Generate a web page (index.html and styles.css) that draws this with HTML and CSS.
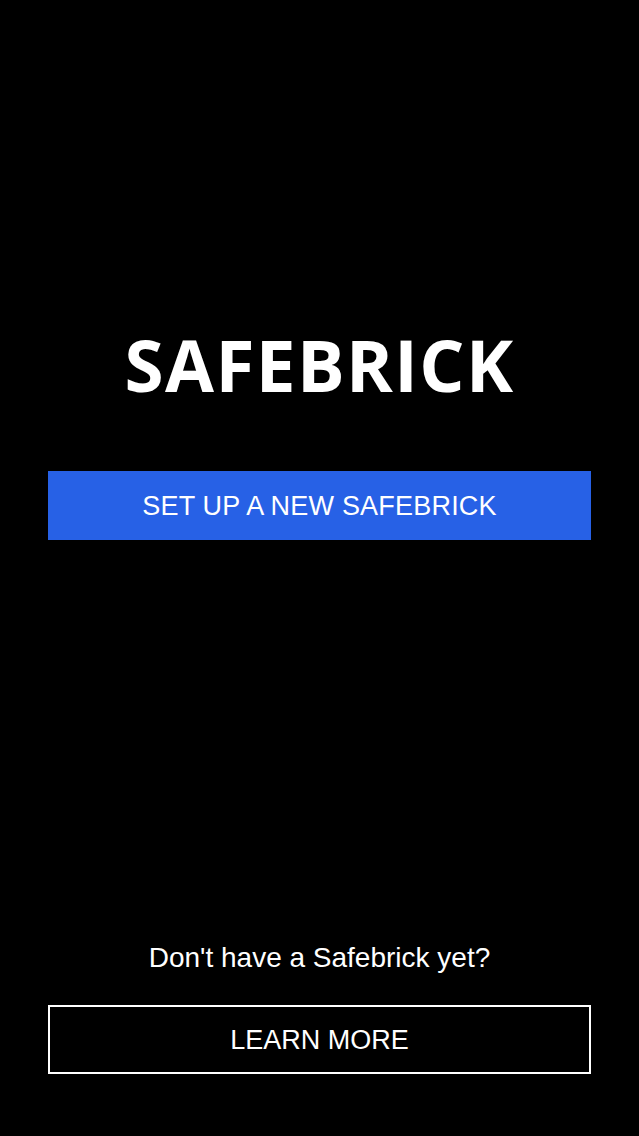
FILE: index.html
```html
<!DOCTYPE html>
<html>
<head>
<meta charset="utf-8">
<link rel="stylesheet" href="styles.css">
</head>
<body>
<div class="screen">
  <div class="top">
    <h1 class="brand">SAFEBRICK</h1>
    <a class="btn btn-primary">SET UP A NEW SAFEBRICK</a>
  </div>
  <div class="bottom">
    <p class="prompt">Don't have a Safebrick yet?</p>
    <a class="btn btn-outline">LEARN MORE</a>
  </div>
</div>
</body>
</html>
```
FILE: styles.css
```css
html, body {
  margin: 0;
  padding: 0;
  background: #000;
}
.screen {
  height: 1136px;
  box-sizing: border-box;
  padding: 0 48px 62px;
  display: flex;
  flex-direction: column;
  color: #fff;
  font-family: "Liberation Sans", Arial, sans-serif;
}
.top {
  padding-top: 319px;
  display: flex;
  flex-direction: column;
}
.brand {
  margin: 0;
  text-align: center;
  font-family: "Open Sans", sans-serif;
  font-weight: 700;
  font-size: 71px;
  line-height: 92px;
  letter-spacing: 1.4px;
}
.btn {
  display: flex;
  align-items: center;
  justify-content: center;
  height: 69px;
  box-sizing: border-box;
  font-size: 27px;
  color: #fff;
}
.btn-primary {
  margin-top: 60px;
  background: #2761e6;
  letter-spacing: 0.2px;
  padding-top: 2px;
}
.bottom {
  margin-top: auto;
  display: flex;
  flex-direction: column;
}
.prompt {
  margin: 0 0 27px;
  text-align: center;
  font-size: 28px;
  line-height: 40px;
}
.btn-outline {
  border: 2px solid #fff;
  padding-top: 1px;
}
```
